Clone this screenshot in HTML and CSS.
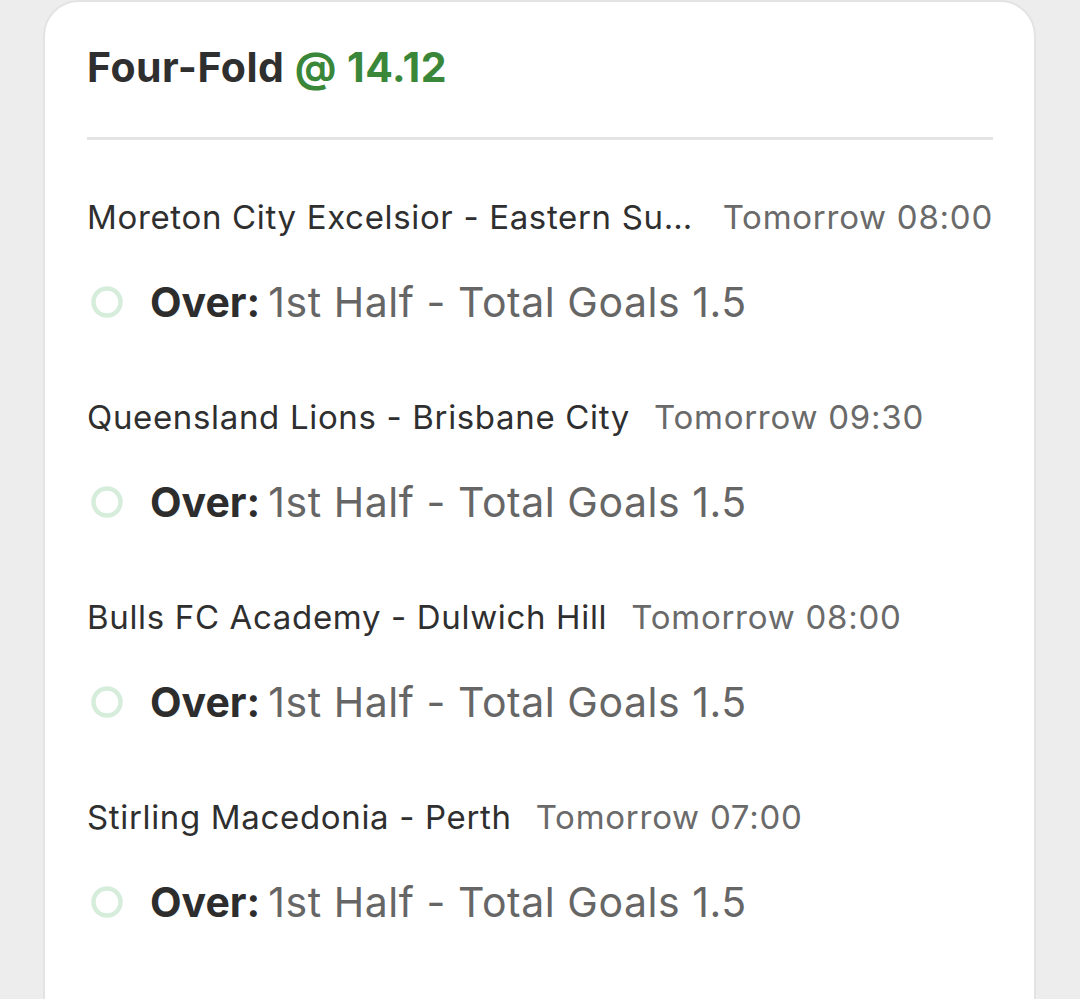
FILE: index.html
```html
<!DOCTYPE html>
<html lang="en">
<head>
<meta charset="utf-8">
<title>Four-Fold</title>
<link rel="stylesheet" href="styles.css">
</head>
<body>
<div class="card">
  <h1 class="title">Four-Fold <span class="odds">@ 14.12</span></h1>
  <hr class="divider">
  <div class="bets">
    <div class="bet">
      <div class="match"><span class="teams">Moreton City Excelsior - Eastern Suburbs</span><span class="time">Tomorrow 08:00</span></div>
      <div class="selection"><span class="radio"><svg width="40" height="40" viewBox="0 0 40 40"><circle cx="20" cy="20" r="13.5" fill="none" stroke="#d7eddb" stroke-width="4.5"/></svg></span><span class="pick">Over:</span><span class="market">1st Half - Total Goals 1.5</span></div>
    </div>
    <div class="bet">
      <div class="match"><span class="teams">Queensland Lions - Brisbane City</span><span class="time">Tomorrow 09:30</span></div>
      <div class="selection"><span class="radio"><svg width="40" height="40" viewBox="0 0 40 40"><circle cx="20" cy="20" r="13.5" fill="none" stroke="#d7eddb" stroke-width="4.5"/></svg></span><span class="pick">Over:</span><span class="market">1st Half - Total Goals 1.5</span></div>
    </div>
    <div class="bet">
      <div class="match"><span class="teams">Bulls FC Academy - Dulwich Hill</span><span class="time">Tomorrow 08:00</span></div>
      <div class="selection"><span class="radio"><svg width="40" height="40" viewBox="0 0 40 40"><circle cx="20" cy="20" r="13.5" fill="none" stroke="#d7eddb" stroke-width="4.5"/></svg></span><span class="pick">Over:</span><span class="market">1st Half - Total Goals 1.5</span></div>
    </div>
    <div class="bet">
      <div class="match"><span class="teams">Stirling Macedonia - Perth</span><span class="time">Tomorrow 07:00</span></div>
      <div class="selection"><span class="radio"><svg width="40" height="40" viewBox="0 0 40 40"><circle cx="20" cy="20" r="13.5" fill="none" stroke="#d7eddb" stroke-width="4.5"/></svg></span><span class="pick">Over:</span><span class="market">1st Half - Total Goals 1.5</span></div>
    </div>
  </div>
</div>
</body>
</html>
```

FILE: styles.css
```css
html, body {
  margin: 0;
  padding: 0;
  background: #ededed;
  font-family: Inter, "Noto Sans", "Liberation Sans", sans-serif;
}
body {
  height: 999px;
  overflow: hidden;
}
.card {
  margin-left: 43px;
  width: 993px;
  box-sizing: border-box;
  min-height: 1100px;
  background: #ffffff;
  border: 2px solid #e3e3e3;
  border-radius: 36px;
  padding: 41px 41px 0 42px;
}
.title {
  margin: 0;
  font-size: 41px;
  line-height: 49px;
  font-weight: 700;
  letter-spacing: 0.5px;
  color: #2f2f2f;
}
.odds {
  color: #3a873a;
}
.divider {
  margin: 45px 0 0 0;
  border: 0;
  height: 3px;
  background: #e4e4e4;
}
.bets {
  padding-top: 57px;
  display: flex;
  flex-direction: column;
  gap: 70px;
}
.bet {
  display: flex;
  flex-direction: column;
  gap: 40px;
}
.match {
  display: flex;
  align-items: center;
  gap: 24px;
  font-size: 33px;
  line-height: 40px;
  height: 40px;
  letter-spacing: 0.66px;
}
.teams {
  color: #2f2f2f;
  white-space: nowrap;
  overflow: hidden;
  text-overflow: ellipsis;
  min-width: 0;
}
.time {
  color: #6a6a6a;
  white-space: nowrap;
  flex-shrink: 0;
  letter-spacing: 0.75px;
}
.selection {
  display: flex;
  align-items: center;
  height: 50px;
  font-size: 41px;
  line-height: 50px;
}
.radio {
  width: 40px;
  height: 40px;
  display: flex;
  margin-right: 23px;
}
.pick {
  font-weight: 700;
  color: #2d2d2d;
  margin-right: 8px;
}
.market {
  color: #666666;
  letter-spacing: 0.55px;
}
```
